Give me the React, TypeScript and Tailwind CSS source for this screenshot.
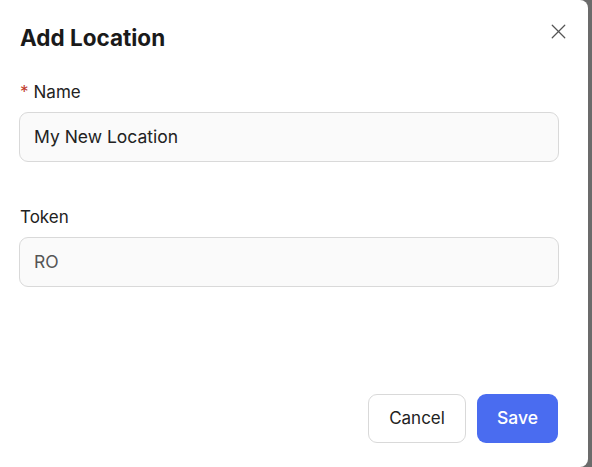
import { X } from 'lucide-react';

export default function App() {
  return (
    <div className="flex h-[467px] w-[592px] bg-[#6b6b6b]" style={{ fontFamily: 'Inter, "Liberation Sans", sans-serif' }}>
      <div className="flex h-full w-[588px] flex-col rounded-r-[8px] bg-white pb-6 pl-[19px] pr-5 pt-[24px]">
        <div className="flex items-start justify-between">
          <h2 className="ml-px text-[22.5px] font-bold leading-[28px] text-[#1a1a1a]">Add Location</h2>
          <button className="mr-[-3px] mt-[-5px] text-[#555]">
            <X className="h-[25px] w-[25px]" strokeWidth={1.2} />
          </button>
        </div>

        <div className="ml-px mt-[29px] flex items-center gap-[5px] text-[17px] leading-[22px] text-[#222]">
          <span className="text-[#c0392b]">*</span>
          <span>Name</span>
        </div>
        <div className="mt-[9px] flex h-[50px] w-[540px] items-center rounded-[9px] border border-[#d9d9d9] bg-[#fafafa] px-[14px] text-[17.5px] text-[#222]">
          My New Location
        </div>

        <div className="ml-px mt-[44px] text-[17px] leading-[22px] text-[#222]">Token</div>
        <div className="mt-[9px] flex h-[50px] w-[540px] items-center rounded-[9px] border border-[#d9d9d9] bg-[#fafafa] px-[14px] text-[17.5px] text-[#555]">
          RO
        </div>

        <div className="mt-auto flex justify-end gap-[11px] pr-[10px]">
          <button className="h-[49px] w-[98px] rounded-[9px] border border-[#d9d9d9] bg-white text-[17px] text-[#222]">
            Cancel
          </button>
          <button className="h-[49px] w-[81px] rounded-[9px] bg-[#4a6cf0] text-[17.5px] font-medium text-white">
            Save
          </button>
        </div>
      </div>
    </div>
  );
}
